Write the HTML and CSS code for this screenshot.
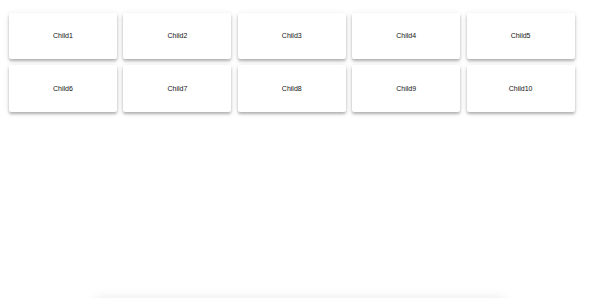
FILE: index.html
```html
<!DOCTYPE html>
<html lang="en">
<head>
  <meta charset="UTF-8" />
  <meta name="viewport" content="width=device-width, initial-scale=1.0" />
  <title>Grid Children</title>
  <link rel="stylesheet" href="styles.css">
</head>
<body>
  <div class="grid">
    <div class="child">Child1</div>
    <div class="child">Child2</div>
    <div class="child">Child3</div>
    <div class="child">Child4</div>
    <div class="child">Child5</div>
    <div class="child">Child6</div>
    <div class="child">Child7</div>
    <div class="child">Child8</div>
    <div class="child">Child9</div>
    <div class="child">Child10</div>
  </div>
  <div class="panel"></div>
</body>
</html>
```

FILE: styles.css
```css
body {
  margin: 0;
  font-family: "Liberation Sans", Arial, sans-serif;
  background-color: #fff;
  color: #111;
}
.grid {
  display: grid;
  grid-template-columns: repeat(5, 108px);
  column-gap: 6.4px;
  row-gap: 6px;
  padding: 12.5px 9px 0;
}
.child {
  height: 46.5px;
  display: flex;
  align-items: center;
  justify-content: center;
  font-size: 7px;
  background-color: #fff;
  border-radius: 2px;
  box-shadow: 0 2px 3px rgba(0,0,0,0.28), 0 1px 7px rgba(0,0,0,0.08);
}
.panel {
  width: 410px;
  height: 60px;
  margin: 188px auto 0;
  background-color: #fff;
  box-shadow: 0 0 12px rgba(0,0,0,0.12);
}
```
